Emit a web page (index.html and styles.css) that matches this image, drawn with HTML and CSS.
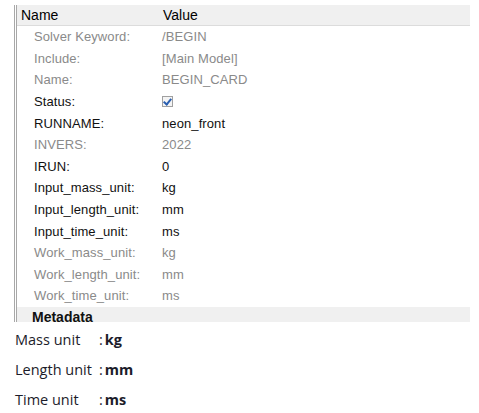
FILE: index.html
```html
<!DOCTYPE html>
<html lang="en">
<head>
  <meta charset="UTF-8" />
  <title>Card Properties</title>
  <link rel="stylesheet" href="styles.css">
</head>
<body>

  <!-- property grid -->
  <div class="props">
    <div class="props-head">
      <span>Name</span>
      <span>Value</span>
    </div>

    <div class="row muted"><span>Solver Keyword:</span><span>/BEGIN</span></div>
    <div class="row muted"><span>Include:</span><span>[Main Model]</span></div>
    <div class="row muted"><span>Name:</span><span>BEGIN_CARD</span></div>
    <div class="row"><span>Status:</span><span><i class="check"></i></span></div>
    <div class="row"><span>RUNNAME:</span><span>neon_front</span></div>
    <div class="row muted"><span>INVERS:</span><span>2022</span></div>
    <div class="row"><span>IRUN:</span><span>0</span></div>
    <div class="row"><span>Input_mass_unit:</span><span>kg</span></div>
    <div class="row"><span>Input_length_unit:</span><span>mm</span></div>
    <div class="row"><span>Input_time_unit:</span><span>ms</span></div>
    <div class="row muted"><span>Work_mass_unit:</span><span>kg</span></div>
    <div class="row muted"><span>Work_length_unit:</span><span>mm</span></div>
    <div class="row muted"><span>Work_time_unit:</span><span>ms</span></div>

    <div class="group">Metadata</div>
  </div>

  <!-- unit summary -->
  <div class="units">
    <div class="unit"><span class="unit-label">Mass unit</span><span>:</span><b>kg</b></div>
    <div class="unit"><span class="unit-label">Length unit</span><span>:</span><b>mm</b></div>
    <div class="unit"><span class="unit-label">Time unit</span><span>:</span><b>ms</b></div>
  </div>

</body>
</html>
```

FILE: styles.css
```css
body {
  margin: 0;
  padding: 5px 0 0 14px;
  background: #fff;
  font-family: 'Liberation Sans', Arial, sans-serif;
}

.props {
  width: 453px;
  height: 317px;
  overflow: hidden;
  border-left: 3px double #a8a8a8;
}

.props-head {
  display: grid;
  grid-template-columns: 142px 1fr;
  height: 20px;
  align-items: center;
  padding-left: 4px;
  background: #f0f0f0;
  border-bottom: 1px solid #dcdcdc;
  font-size: 14px;
  color: #000;
}

.row {
  display: grid;
  grid-template-columns: 145px 1fr;
  height: 21.6px;
  align-items: center;
  font-size: 13px;
  letter-spacing: 0.1px;
  color: #111;
}

.row span:first-child {
  padding-left: 17px;
}

.row.muted {
  color: #8a8a8a;
}

.check {
  display: block;
  width: 9px;
  height: 9px;
  border: 1px solid #a0a0a0;
  background: #f4f4f4;
  position: relative;
}

.check::after {
  content: "";
  position: absolute;
  left: 2px;
  top: 0px;
  width: 3px;
  height: 6px;
  border: solid #2a5fb0;
  border-width: 0 2px 2px 0;
  transform: rotate(40deg);
}

.group {
  height: 22px;
  padding-left: 15px;
  line-height: 21px;
  background: #f0f0f0;
  font-size: 14px;
  font-weight: bold;
  color: #111;
}

.units {
  padding-top: 2px;
  font-family: 'Open Sans', sans-serif;
  font-size: 14.5px;
  color: #1c1c2a;
}

.unit {
  display: flex;
  align-items: center;
  gap: 2px;
  height: 30px;
  margin-left: 1px;
}

.unit-label {
  width: 82px;
}

.unit b {
  font-weight: 700;
}
```
